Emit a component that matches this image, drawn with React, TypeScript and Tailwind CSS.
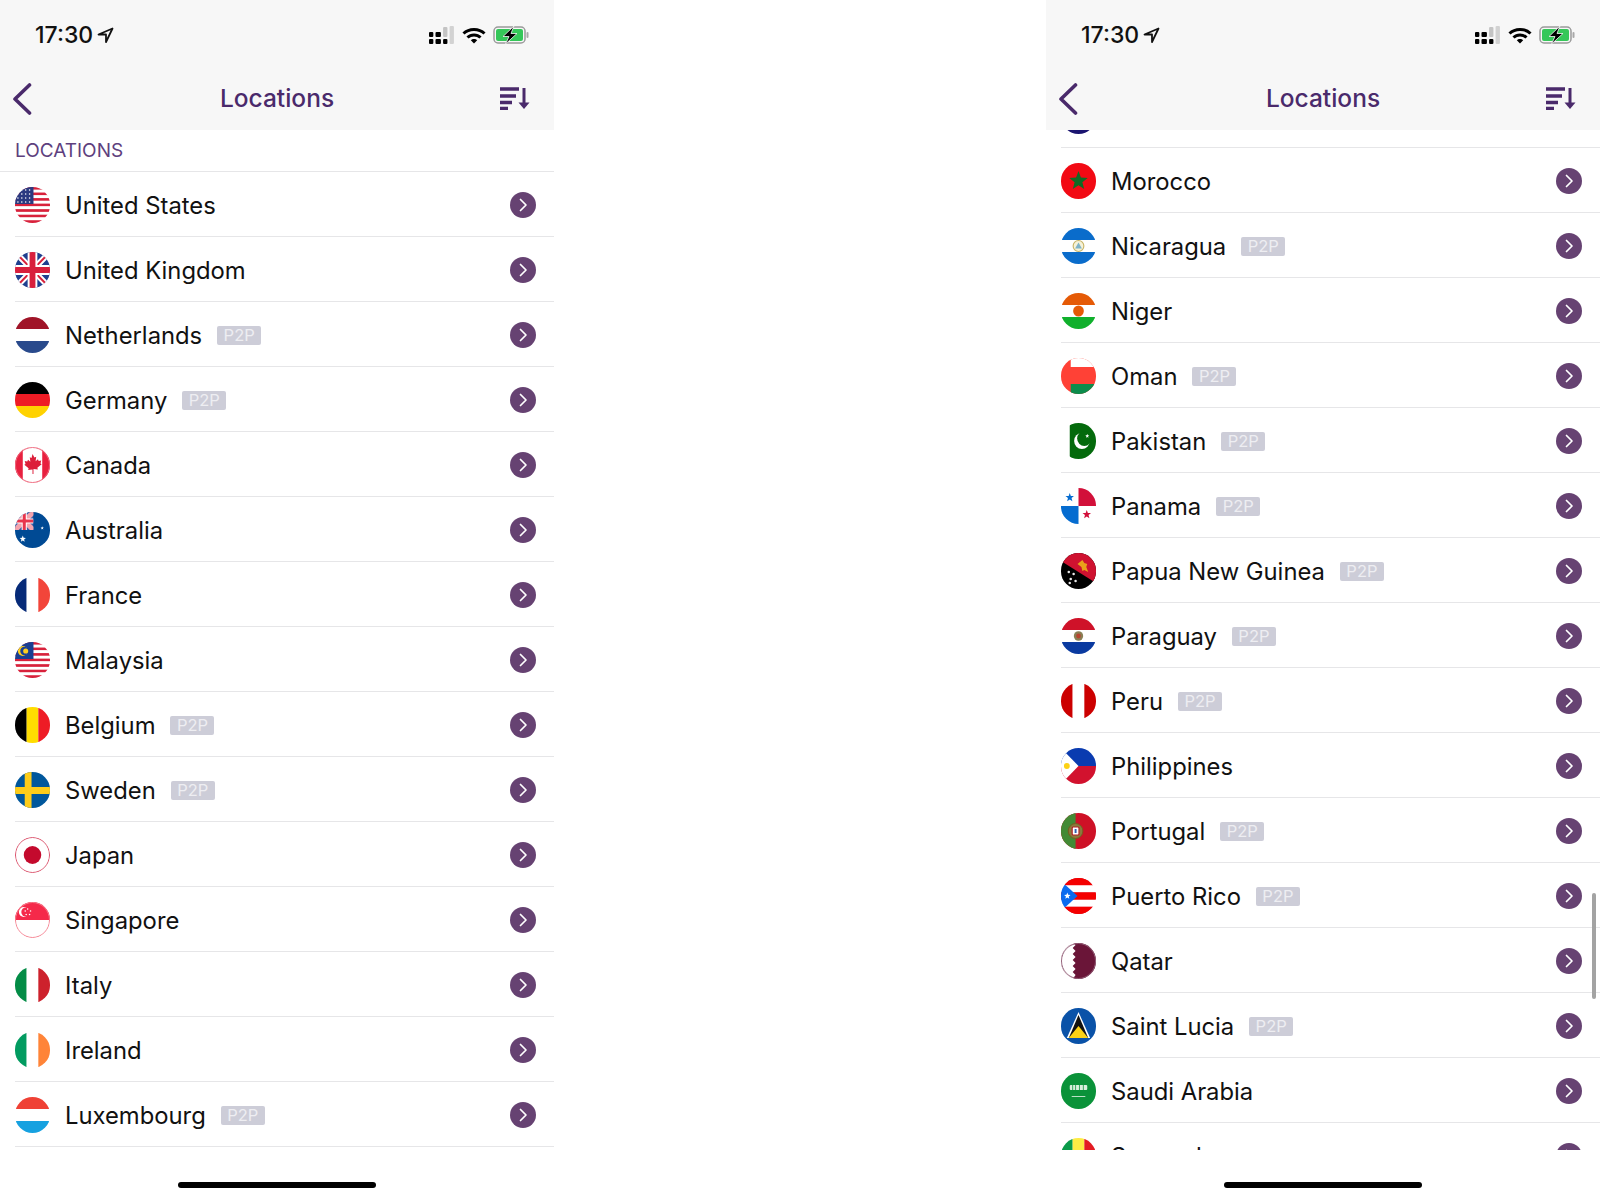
import type { ReactNode } from "react";

const star = (cx: number, cy: number, r: number) => {
    const pts: string[] = [];
    for (let i = 0; i < 10; i++) {
        const rad = i % 2 === 0 ? r : r * 0.42;
        const a = (Math.PI / 5) * i - Math.PI / 2;
        pts.push(`${(cx + rad * Math.cos(a)).toFixed(2)},${(cy + rad * Math.sin(a)).toFixed(2)}`);
    }
    return pts.join(" ");
};

const Vertical = ({ a, b, c }: { a: string; b: string; c: string }) => (
    <>
        <rect x="0" y="0" width="12" height="36" fill={a} />
        <rect x="12" y="0" width="12" height="36" fill={b} />
        <rect x="24" y="0" width="12" height="36" fill={c} />
    </>
);

const Horizontal = ({ a, b, c }: { a: string; b: string; c: string }) => (
    <>
        <rect x="0" y="0" width="36" height="12" fill={a} />
        <rect x="0" y="12" width="36" height="12" fill={b} />
        <rect x="0" y="24" width="36" height="12" fill={c} />
    </>
);

const Stripes = ({ n }: { n: number }) => (
    <>
        {Array.from({ length: n }).map((_, i) => (
            <rect key={i} x="0" y={(i * 36) / n} width="36" height={36 / n} fill={i % 2 === 0 ? "#d8213b" : "#ffffff"} />
        ))}
    </>
);

const Union = () => (
    <>
        <rect width="36" height="36" fill="#1f3f8f" />
        <path d="M0 0L36 36M36 0L0 36" stroke="#fff" strokeWidth="6" />
        <path d="M0 0L36 36M36 0L0 36" stroke="#d8213b" strokeWidth="2" />
        <path d="M18 0V36M0 18H36" stroke="#fff" strokeWidth="10" />
        <path d="M18 0V36M0 18H36" stroke="#d81f3c" strokeWidth="6" />
    </>
);

const flags: Record<string, ReactNode> = {
    "United States": (
        <>
            <Stripes n={13} />
            <rect width="19" height="17" fill="#2b3a80" />
            {[3, 7, 11, 15].map((x) =>
                [3, 7, 11, 15].map((y) => <circle key={`${x}-${y}`} cx={x} cy={y} r="0.8" fill="#fff" />),
            )}
        </>
    ),
    "United Kingdom": <Union />,
    Netherlands: <Horizontal a="#a01428" b="#ffffff" c="#294a8c" />,
    Germany: <Horizontal a="#000000" b="#ee1c25" c="#ffd200" />,
    Canada: (
        <>
            <rect width="36" height="36" fill="#e8203f" />
            <rect x="8" y="0" width="20" height="36" fill="#fff" />
            <path
                d="M18 7l2 3.5 1.800-.8-.6 4.500 2.400-2 .8 1.800 2.600-.4-.8 2.800 1.200.8-4.400 3.600.5 1.800-4.500-.6V27h-1v-4.500l-4.500.6.500-1.800-4.400-3.600 1.200-.8-.8-2.800 2.600.4.800-1.800 2.400 2-.6-4.500 1.800.8z"
                fill="#dc1f3a"
            />
            <circle cx="18" cy="18" r="17.500" fill="none" stroke="#ee6a7e" strokeWidth="1" />
        </>
    ),
    Australia: (
        <>
            <rect width="36" height="36" fill="#004a94" />
            <svg x="0" y="0" width="19" height="18" viewBox="0 0 36 36" preserveAspectRatio="none">
                <rect width="36" height="36" fill="#3a5fa8" />
                <path d="M0 0L36 36M36 0L0 36" stroke="#f4a3ad" strokeWidth="10" />
                <path d="M18 0V36M0 18H36" stroke="#fff" strokeWidth="10" />
                <path d="M18 0V36M0 18H36" stroke="#e8354c" strokeWidth="6" />
            </svg>
            <polygon points={star(8, 27, 3.400)} fill="#fff" />
            <polygon points={star(28, 16, 1.800)} fill="#fff" />
        </>
    ),
    France: <Vertical a="#062a78" b="#ffffff" c="#f2453a" />,
    Malaysia: (
        <>
            <Stripes n={13} />
            <rect width="19" height="17" fill="#1a3f92" />
            <circle cx="8" cy="9" r="5" fill="#ffcf1f" />
            <circle cx="9.600" cy="9" r="4.200" fill="#1a3f92" />
            <circle cx="11" cy="9" r="2.600" fill="#ffcf1f" />
        </>
    ),
    Belgium: <Vertical a="#000000" b="#ffdc00" c="#ee1c25" />,
    Sweden: (
        <>
            <rect width="36" height="36" fill="#00579c" />
            <rect x="10" width="7" height="36" fill="#fdcc1a" />
            <rect y="15" width="36" height="7" fill="#fdcc1a" />
        </>
    ),
    Japan: (
        <>
            <rect width="36" height="36" fill="#fff" />
            <circle cx="18" cy="18" r="9" fill="#c40a2d" />
            <circle cx="18" cy="18" r="17.500" fill="none" stroke="#d9506a" strokeWidth="1" />
        </>
    ),
    Singapore: (
        <>
            <rect width="36" height="36" fill="#fff" />
            <rect width="36" height="18" fill="#f5294a" />
            <circle cx="9" cy="10" r="5" fill="#fff" />
            <circle cx="11" cy="10" r="4.500" fill="#f5294a" />
            {[
                [13, 7],
                [16, 9],
                [15, 12.500],
                [11.500, 12.500],
                [10.500, 9],
            ].map(([x, y]) => (
                <circle key={`${x}-${y}`} cx={x} cy={y} r="0.8" fill="#fff" />
            ))}
            <circle cx="18" cy="18" r="17.500" fill="none" stroke="#f5808f" strokeWidth="1" />
        </>
    ),
    Italy: <Vertical a="#038c46" b="#ffffff" c="#cd212c" />,
    Ireland: <Vertical a="#029b60" b="#ffffff" c="#ff8438" />,
    Luxembourg: <Horizontal a="#ef4135" b="#ffffff" c="#16a1e0" />,
    Montserrat: <rect width="36" height="36" fill="#1a1470" />,
    Morocco: (
        <>
            <rect width="36" height="36" fill="#f20a14" />
            <polygon points={star(18, 18, 10)} fill="#0f6b25" />
        </>
    ),
    Nicaragua: (
        <>
            <Horizontal a="#0a6ccb" b="#ffffff" c="#0a6ccb" />
            <circle cx="18" cy="18" r="5.500" fill="#f6f2d8" stroke="#c9b66a" strokeWidth="1.200" />
            <path d="M18 14.500l3.500 6h-7z" fill="#7fb3c9" />
        </>
    ),
    Niger: (
        <>
            <Horizontal a="#e55a06" b="#ffffff" c="#10b02c" />
            <circle cx="18" cy="18" r="5.500" fill="#e55a06" />
        </>
    ),
    Oman: (
        <>
            <rect width="36" height="36" fill="#ff4136" />
            <rect x="10" width="26" height="9" fill="#fff" />
            <rect x="10" y="26" width="26" height="10" fill="#0c8c4c" />
        </>
    ),
    Pakistan: (
        <>
            <rect width="36" height="36" fill="#fff" />
            <rect x="9" width="27" height="36" fill="#046a0c" />
            <circle cx="21.500" cy="18" r="8" fill="#fff" />
            <circle cx="24" cy="15.500" r="7.400" fill="#046a0c" />
            <polygon points={star(27, 13, 2.200)} fill="#fff" />
        </>
    ),
    Panama: (
        <>
            <rect width="36" height="36" fill="#fff" />
            <rect x="18" width="18" height="18" fill="#d2103a" />
            <rect y="18" width="18" height="18" fill="#056cd0" />
            <polygon points={star(9, 9.500, 4.600)} fill="#056cd0" />
            <polygon points={star(26.500, 26.500, 4.600)} fill="#d2103a" />
        </>
    ),
    "Papua New Guinea": (
        <>
            <rect width="36" height="36" fill="#000" />
            <polygon points="0,8 6,0 36,0 36,30" fill="#cf1230" />
            <path d="M17 11l5-4 2 3 3 1-1 3 2 5-4-2-2 1-1-4z" fill="#e9a21a" />
            {[
                [8, 19],
                [13, 21],
                [10, 26],
                [15, 28],
                [9, 30],
            ].map(([x, y]) => (
                <circle key={`${x}-${y}`} cx={x} cy={y} r="1.300" fill="#e8e8e8" />
            ))}
        </>
    ),
    Paraguay: (
        <>
            <Horizontal a="#cf1229" b="#ffffff" c="#0a3aa0" />
            <circle cx="18" cy="18" r="4.800" fill="#8a7f55" />
            <circle cx="18" cy="18" r="2.400" fill="#b8442f" />
        </>
    ),
    Peru: <Vertical a="#cc0000" b="#ffffff" c="#cc0000" />,
    Philippines: (
        <>
            <rect width="36" height="18" fill="#0a3bb0" />
            <rect y="18" width="36" height="18" fill="#d2122e" />
            <polygon points="0,0 18,18 0,36" fill="#fff" />
            <circle cx="6" cy="18" r="3" fill="#fcd116" />
        </>
    ),
    Portugal: (
        <>
            <rect width="36" height="36" fill="#ce1126" />
            <rect width="15" height="36" fill="#438a35" />
            <circle cx="15" cy="18" r="7.500" fill="#8a7a3c" stroke="#7a5a20" strokeWidth="1" />
            <rect x="11.500" y="14" width="7" height="8" rx="1" fill="#fff" stroke="#b32026" strokeWidth="1.200" />
            <rect x="14" y="16" width="2" height="4" fill="#2f62b0" />
        </>
    ),
    "Puerto Rico": (
        <>
            <Stripes n={5} />
            {[0, 2, 4].map((i) => (
                <rect key={i} y={(i * 36) / 5} width="36" height={36 / 5} fill="#f40000" />
            ))}
            <polygon points="0,3 17,18 0,33" fill="#0a6bf0" />
            <polygon points={star(6.500, 18, 3.500)} fill="#fff" />
        </>
    ),
    Qatar: (
        <>
            <rect width="36" height="36" fill="#6a1538" />
            <polygon
                points="0,0 12,0 15,2 12,5 15,8 12,11 15,14 12,17 15,20 12,23 15,26 12,29 15,32 12,36 0,36"
                fill="#fff"
            />
            <circle cx="18" cy="18" r="17.500" fill="none" stroke="#93627a" strokeWidth="1" />
        </>
    ),
    "Saint Lucia": (
        <>
            <rect width="36" height="36" fill="#0a52a8" />
            <polygon points="18,4 30,30 6,30" fill="#fff" />
            <polygon points="18,7 28,30 8,30" fill="#111" />
            <polygon points="18,18 28,30 8,30" fill="#fcd116" />
        </>
    ),
    "Saudi Arabia": (
        <>
            <rect width="36" height="36" fill="#0a9239" />
            <rect x="9" y="12" width="18" height="5" rx="1" fill="#d7efdc" />
            <path d="M12 12v5M15 12v5M19 12v5M23 12v5" stroke="#0a9239" strokeWidth="0.800" />
            <rect x="11" y="23" width="14" height="0.800" fill="#e7f5ea" />
        </>
    ),
    Senegal: <Vertical a="#0a9a4a" b="#fdec44" c="#e31b23" />,
};

type Country = { name: string; p2p?: boolean };

const leftList: Country[] = [
    { name: "United States" },
    { name: "United Kingdom" },
    { name: "Netherlands", p2p: true },
    { name: "Germany", p2p: true },
    { name: "Canada" },
    { name: "Australia" },
    { name: "France" },
    { name: "Malaysia" },
    { name: "Belgium", p2p: true },
    { name: "Sweden", p2p: true },
    { name: "Japan" },
    { name: "Singapore" },
    { name: "Italy" },
    { name: "Ireland" },
    { name: "Luxembourg", p2p: true },
];

const rightList: Country[] = [
    { name: "Montserrat" },
    { name: "Morocco" },
    { name: "Nicaragua", p2p: true },
    { name: "Niger" },
    { name: "Oman", p2p: true },
    { name: "Pakistan", p2p: true },
    { name: "Panama", p2p: true },
    { name: "Papua New Guinea", p2p: true },
    { name: "Paraguay", p2p: true },
    { name: "Peru", p2p: true },
    { name: "Philippines" },
    { name: "Portugal", p2p: true },
    { name: "Puerto Rico", p2p: true },
    { name: "Qatar" },
    { name: "Saint Lucia", p2p: true },
    { name: "Saudi Arabia" },
    { name: "Senegal" },
];

function StatusBar() {
    return (
        <div className="h-[70px] flex items-center justify-between pl-[35px] pr-[24px]">
            <div className="flex items-center gap-[4px]">
                <span className="text-[23px] font-medium text-[#111]">17:30</span>
                <svg width="17" height="17" viewBox="0 0 17 17" fill="none" stroke="#111" strokeWidth="1.800" strokeLinejoin="round">
                    <path d="M15.500 1.500L1.500 7.500H9V15z" />
                </svg>
            </div>
            <div className="flex items-center gap-[7px]">
                <svg width="26" height="18" viewBox="0 0 24 18" preserveAspectRatio="none">
                    <rect x="0" y="6" width="4" height="5" rx="1" fill="#000" />
                    <rect x="0" y="13" width="4" height="5" rx="1" fill="#000" />
                    <rect x="6" y="6" width="5" height="5" rx="1" fill="#000" />
                    <rect x="6" y="13" width="5" height="5" rx="1" fill="#000" />
                    <rect x="13" y="1" width="4" height="10" rx="1" fill="#c4c4c4" />
                    <rect x="13" y="13" width="4" height="5" rx="1" fill="#000" />
                    <rect x="19" y="0" width="4" height="18" rx="1" fill="#d2d2d2" />
                </svg>
                <svg width="24" height="17" viewBox="0 0 24 17" fill="none" stroke="#000" strokeWidth="3">
                    <path d="M1.500 6.500C7 1 17 1 22.500 6.500" />
                    <path d="M5.500 10.500C9 7 15 7 18.500 10.500" />
                    <path d="M12 16.500L8.800 13.300C10.500 11.600 13.500 11.600 15.200 13.300z" fill="#000" stroke="none" />
                </svg>
                <svg width="37" height="18" viewBox="0 0 37 18">
                    <rect x="1" y="1" width="31" height="16" rx="4" fill="none" stroke="#9a9a9a" strokeWidth="1.500" />
                    <rect x="3" y="3" width="27" height="12" rx="2" fill="#35c759" />
                    <rect x="33.500" y="6" width="2" height="6" rx="1" fill="#a8a8a8" />
                    <path d="M21 0L10 10.500H16L12.500 18L24 7.500H18z" fill="#000" stroke="#f7f7f7" strokeWidth="0.800" />
                </svg>
            </div>
        </div>
    );
}

function NavBar() {
    return (
        <div className="h-[60px] pb-[3px] flex items-center justify-between pl-[12px] pr-[24px]">
            <div className="w-[52px]">
                <svg width="20" height="32" viewBox="0 0 20 32" fill="none" stroke="#4a2a6b" strokeWidth="3.600" strokeLinecap="round" strokeLinejoin="round">
                    <path d="M17.500 2L3 16l14.500 14" />
                </svg>
            </div>
            <h1 className="text-[24.500px] font-medium text-[#4a2a6b]">Locations</h1>
            <div className="w-[40px] flex justify-end">
                <svg width="31" height="23" viewBox="0 0 31 23" fill="none" stroke="#4a2a6b" strokeWidth="3.400">
                    <path d="M1 2H20M1 9H17M1 15.500H13M1 21.500H9" />
                    <path d="M25 1V19" strokeWidth="3" />
                    <path d="M19.500 15.500H30.500L25 22z" fill="#4a2a6b" stroke="none" />
                </svg>
            </div>
        </div>
    );
}

function Row({ name, p2p }: Country) {
    return (
        <div className="h-[65px] ml-[15px] pr-[18px] pt-[2px] flex items-center border-b border-[#e6e6e8]">
            <svg viewBox="0 0 36 36" preserveAspectRatio="none" className="w-[35px] h-[36px] rounded-full shrink-0">
                {flags[name]}
            </svg>
            <span className="ml-[15px] pt-[1px] text-[23.800px] text-[#111]">{name}</span>
            {p2p && (
                <span className="ml-[15px] w-[44px] h-[19px] flex items-center justify-center rounded-[2px] bg-[#cdcdd8] text-[16.500px] text-[#eeeef2]">
                    P2P
                </span>
            )}
            <span className="ml-auto w-[26px] h-[26px] rounded-full bg-[#664272] flex items-center justify-center">
                <svg width="10" height="14" viewBox="0 0 10 14" fill="none" stroke="#fff" strokeWidth="1.700" strokeLinecap="round" strokeLinejoin="round">
                    <path d="M2.500 1.500L8 7l-5.500 5.500" />
                </svg>
            </span>
        </div>
    );
}

function Phone({ children }: { children: ReactNode }) {
    return (
        <div className="w-[554px] h-[1200px] flex flex-col bg-white">
            <div className="h-[130px] shrink-0 bg-[#f7f7f7]">
                <StatusBar />
                <NavBar />
            </div>
            <div className="h-[1020px] overflow-hidden relative">{children}</div>
            <div className="flex-1 flex justify-center pt-[32px]">
                <div className="w-[198px] h-[6px] rounded-full bg-black" />
            </div>
        </div>
    );
}

export default function App() {
    return (
        <div className="w-[1600px] h-[1200px] bg-white flex justify-between font-['Inter',sans-serif] relative">
            <Phone>
                <div className="h-[42px] pt-[2px] pl-[15px] flex items-center border-b border-[#e6e6e8] text-[19px] text-[#5e3f7e]">
                    LOCATIONS
                </div>
                {leftList.map((c) => (
                    <Row key={c.name} {...c} />
                ))}
            </Phone>
            <Phone>
                <div className="-mt-[47px]">
                    {rightList.map((c) => (
                        <Row key={c.name} {...c} />
                    ))}
                </div>
            </Phone>
            {/* scroll indicator */}
            <div className="absolute left-[1592px] top-[893px] w-[4px] h-[106px] rounded-full bg-[#a3a3a3]" />
        </div>
    );
}
